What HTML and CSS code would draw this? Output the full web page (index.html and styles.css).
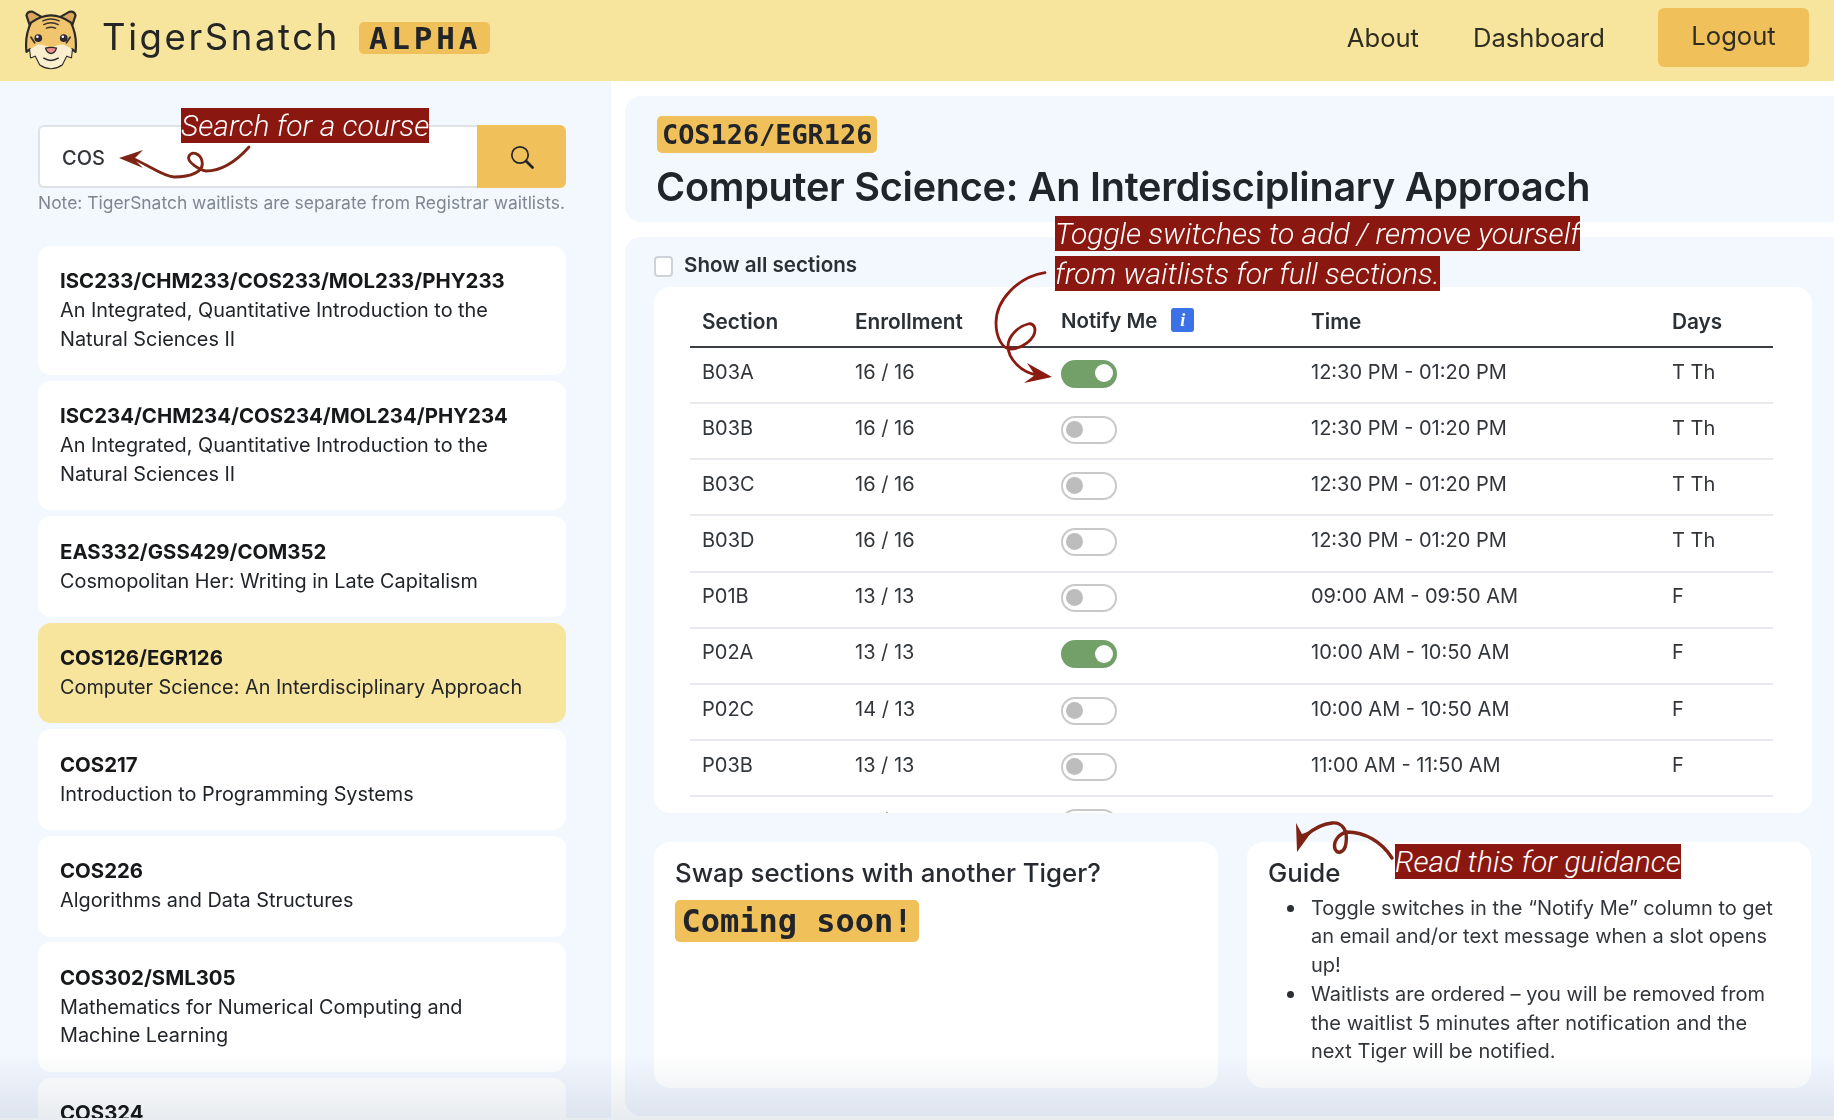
FILE: index.html
```html
<!DOCTYPE html>
<html lang="en">
<head>
<meta charset="utf-8">
<title>TigerSnatch</title>
<link rel="stylesheet" href="styles.css">
</head>
<body>
<div class="page">
  <header class="topbar">
    <div class="brand">
      <svg class="logo" viewBox="0 0 60 66" aria-hidden="true">
        <path d="M9 24 L3 6 Q4 1 10 2 L22 9 Z" fill="#d9a75b" stroke="#2c2a28" stroke-width="2.4" stroke-linejoin="round"/>
        <path d="M51 24 L57 6 Q56 1 50 2 L38 9 Z" fill="#d9a75b" stroke="#2c2a28" stroke-width="2.4" stroke-linejoin="round"/>
        <path d="M8 14 Q30 -2 52 14 Q59 28 57 46 L53 43 L52 52 L47 50 L42 60 Q30 68 18 60 L13 50 L8 52 L7 43 L3 46 Q1 28 8 14Z" fill="#f0c56d" stroke="#2c2a28" stroke-width="2.4" stroke-linejoin="round"/>
        <path d="M7 43 L8 52 L13 50 L18 60 Q30 68 42 60 L47 50 L52 52 L53 43 L44 38 Q38 37 30 42 Q22 37 16 38Z" fill="#f9efcf"/>
        <path d="M21 12 Q30 8 39 12 M22 16 Q30 12 38 16 M25 20 Q30 18 35 20" fill="none" stroke="#3a342c" stroke-width="1.6" stroke-linecap="round"/>
        <path d="M8 30 L12 36 M51 30 L47 36" fill="none" stroke="#3a342c" stroke-width="2" stroke-linecap="round"/>
        <circle class="eye" cx="16" cy="31" r="4.2"/>
        <circle class="eye" cx="44" cy="31" r="4.2"/>
        <circle class="glint" cx="15" cy="29.5" r="1.4"/>
        <circle class="glint" cx="43" cy="29.5" r="1.4"/>
        <path d="M24 42 Q30 40 36 42 Q35 47 30 48 Q25 47 24 42Z" fill="#ee8e8e" stroke="#2c2a28" stroke-width="1.4"/>
        <path d="M22 53 Q30 58 38 53" fill="none" stroke="#2c2a28" stroke-width="1.6" stroke-linecap="round"/>
      </svg>
      <span class="brand-name">TigerSnatch</span>
      <span class="alpha">ALPHA</span>
    </div>
    <nav class="nav">
      <a class="nav-link">About</a>
      <a class="nav-link">Dashboard</a>
      <a class="logout">Logout</a>
    </nav>
  </header>

  <main class="layout">
    <aside class="sidebar">
      <div class="search">
        <div class="search-input">COS</div>
        <div class="search-btn">
          <svg width="26" height="26" viewBox="0 0 26 26" aria-hidden="true">
            <circle cx="11" cy="11" r="8.2" fill="none" stroke="#212529" stroke-width="1.7"/>
            <path d="M17 17 L23.5 23.5" stroke="#212529" stroke-width="2.8" stroke-linecap="round"/>
          </svg>
        </div>
      </div>
      <p class="note">Note: TigerSnatch waitlists are separate from Registrar waitlists.</p>
      <div class="courses">
        <div class="course"><b>ISC233/CHM233/COS233/MOL233/PHY233</b><span>An Integrated, Quantitative Introduction to the Natural Sciences II</span></div>
        <div class="course"><b>ISC234/CHM234/COS234/MOL234/PHY234</b><span>An Integrated, Quantitative Introduction to the Natural Sciences II</span></div>
        <div class="course"><b>EAS332/GSS429/COM352</b><span>Cosmopolitan Her: Writing in Late Capitalism</span></div>
        <div class="course active"><b>COS126/EGR126</b><span>Computer Science: An Interdisciplinary Approach</span></div>
        <div class="course"><b>COS217</b><span>Introduction to Programming Systems</span></div>
        <div class="course"><b>COS226</b><span>Algorithms and Data Structures</span></div>
        <div class="course"><b>COS302/SML305</b><span>Mathematics for Numerical Computing and Machine Learning</span></div>
        <div class="course"><b>COS324</b><span>Introduction to Machine Learning</span></div>
      </div>
    </aside>

    <section class="content">
      <div class="title-panel">
        <span class="code-badge">COS126/EGR126</span>
        <h1 class="course-title">Computer Science: An Interdisciplinary Approach</h1>
      </div>
      <div class="detail-panel">
        <label class="show-all"><span class="checkbox"></span>Show all sections</label>
        <div class="table-card">
          <table class="sections">
            <thead>
              <tr><th class="c1">Section</th><th class="c2">Enrollment</th><th class="c3"><span class="notify">Notify Me<i class="info">i</i></span></th><th class="c4">Time</th><th>Days</th></tr>
            </thead>
            <tbody>
              <tr><td>B03A</td><td>16 / 16</td><td><span class="toggle on"></span></td><td>12:30 PM - 01:20 PM</td><td>T Th</td></tr>
              <tr><td>B03B</td><td>16 / 16</td><td><span class="toggle"></span></td><td>12:30 PM - 01:20 PM</td><td>T Th</td></tr>
              <tr><td>B03C</td><td>16 / 16</td><td><span class="toggle"></span></td><td>12:30 PM - 01:20 PM</td><td>T Th</td></tr>
              <tr><td>B03D</td><td>16 / 16</td><td><span class="toggle"></span></td><td>12:30 PM - 01:20 PM</td><td>T Th</td></tr>
              <tr><td>P01B</td><td>13 / 13</td><td><span class="toggle"></span></td><td>09:00 AM - 09:50 AM</td><td>F</td></tr>
              <tr><td>P02A</td><td>13 / 13</td><td><span class="toggle on"></span></td><td>10:00 AM - 10:50 AM</td><td>F</td></tr>
              <tr><td>P02C</td><td>14 / 13</td><td><span class="toggle"></span></td><td>10:00 AM - 10:50 AM</td><td>F</td></tr>
              <tr><td>P03B</td><td>13 / 13</td><td><span class="toggle"></span></td><td>11:00 AM - 11:50 AM</td><td>F</td></tr>
              <tr><td>P04A</td><td>13 / 13</td><td><span class="toggle"></span></td><td>01:30 PM - 02:20 PM</td><td>F</td></tr>
            </tbody>
          </table>
        </div>
        <div class="bottom-cards">
          <div class="info-card">
            <h2 class="card-title">Swap sections with another Tiger?</h2>
            <span class="soon">Coming soon!</span>
          </div>
          <div class="info-card">
            <h2 class="card-title">Guide</h2>
            <ul class="guide">
              <li>Toggle switches in the “Notify Me” column to get an email and/or text message when a slot opens up!</li>
              <li>Waitlists are ordered – you will be removed from the waitlist 5 minutes after notification and the next Tiger will be notified.</li>
            </ul>
          </div>
        </div>
      </div>
    </section>
  </main>

  <div class="fade"></div>

  <svg class="arrows" width="1834" height="1120" viewBox="0 0 1834 1120" aria-hidden="true">
    <g class="arrow-line">
      <path class="thin" d="M249 147 C232 166 218 171 206 171 C200 170 186 162 189 156 C192 151 200 153 202 161 C205 172 190 177 174 177 C162 176 150 166 134 159"/>
      <path class="thin red" d="M1045 272.7 C1018 277 996 300 996 323 C996 338 1003 349 1010 349 C1022 349 1035 339 1035 330 C1035 325 1031 323 1028 324 C1019 326 1008 336 1008 346 C1008 358 1020 372 1037 375"/>
      <path d="M1392 858 C1382 842 1365 832 1347 832 C1338 834 1333 842 1335 849 C1338 855 1345 852 1346 843 C1348 830 1342 822 1332 823 C1320 824 1312 830 1305 836"/>
    </g>
    <g class="arrow-head">
      <path d="M119 158 L143 150 L134 159 L143 168Z"/>
      <path class="red" d="M1052 377 L1027 363 L1035 375 L1024 383Z"/>
      <path d="M1297 852 L1296 823 L1302 834 L1313 830Z"/>
    </g>
  </svg>
  <div class="tag tag-search">Search for a course</div>
  <div class="tag tag-toggle"><span>Toggle switches to add / remove yourself</span><span>from waitlists for full sections.</span></div>
  <div class="tag tag-guide">Read this for guidance</div>
</div>
</body>
</html>
```
FILE: styles.css
```css
* { box-sizing: border-box; }
html, body { margin: 0; padding: 0; }
body {
  background: #fff;
  color: #212529;
  font-family: Inter, "Noto Sans", "Liberation Sans", sans-serif;
  font-size: 20px;
  line-height: 28.8px;
}
.page { position: relative; width: 1834px; height: 1120px; overflow: hidden; }

.topbar {
  display: flex;
  align-items: center;
  justify-content: space-between;
  height: 81px;
  padding: 0 25px 0 23px;
  background: #f7e49d;
}
.brand { display: flex; align-items: center; margin-top: -8px; }
.logo { width: 56px; height: 60px; margin-top: 6px; }
.eye { fill: #2b2a33; }
.glint { fill: #fff; }
.brand-name {
  margin-left: 23px;
  font-size: 36.5px;
  line-height: 44px;
  letter-spacing: 2.6px;
  color: #252525;
}
.alpha {
  margin: 2px 0 0 19px;
  padding: 0 9px 0 10px;
  border-radius: 5px;
  background: #f0c15a;
  font-family: "DejaVu Sans Mono", monospace;
  font-weight: 700;
  font-size: 31px;
  line-height: 32px;
  letter-spacing: 3.8px;
}
.nav { display: flex; align-items: center; }
.nav-link { margin-right: 54px; font-size: 25.6px; color: #302e22; position: relative; left: 2px; top: -2px; }
.logout {
  display: block;
  width: 151px;
  height: 59px;
  margin: -6px 0 0 1px;
  border-radius: 6px;
  background: #f0c15a;
  font-size: 25.6px;
  line-height: 56px;
  text-align: center;
  color: #302e22;
}

.layout { display: flex; height: 1037px; }
.sidebar {
  flex: none;
  width: 611px;
  padding: 44px 45px 0 38px;
  background: #f3f7fe;
  overflow: hidden;
}
.search { display: flex; height: 63px; }
.search-input {
  flex: 1;
  padding-left: 22px;
  border: 2.5px solid #dee2e6;
  border-right: 0;
  border-radius: 6px 0 0 6px;
  background: #fff;
  font-weight: 500;
  line-height: 62px;
  color: #32363a;
}
.search-btn {
  display: flex;
  align-items: center;
  justify-content: center;
  width: 89px;
  border-radius: 0 6px 6px 0;
  background: #f0c15a;
}
.note {
  margin: 1px 0 0;
  font-size: 17.45px;
  line-height: 28px;
  white-space: nowrap;
  color: #7e8791;
}
.courses {
  display: flex;
  flex-direction: column;
  gap: 5.76px;
  margin-top: 28.5px;
}
.course {
  flex: none;
  padding: 21.6px 22px;
  border-radius: 13px;
  background: #fff;
}
.course b { display: block; font-weight: 700; font-size: 20.4px; color: #16181a; }
.course span { display: block; font-size: 19.85px; }
.course.active { background: #f7e49d; }

.content {
  flex: 1;
  min-width: 0;
  padding: 15px 0 2px 14px;
  display: flex;
  flex-direction: column;
  gap: 15px;
}
.title-panel {
  height: 126px;
  padding: 20px 32px 0;
  border-radius: 16px 0 0 16px;
  background: #f3f7fe;
}
.code-badge {
  display: inline-block;
  height: 37px;
  padding: 0 5px;
  border-radius: 5px;
  background: #f0c15a;
  font-family: "DejaVu Sans Mono", monospace;
  font-weight: 700;
  font-size: 26.88px;
  line-height: 37px;
}
.course-title {
  margin: 10px 0 0 -1px;
  font-size: 39.6px;
  line-height: 48px;
  font-weight: 600;
  letter-spacing: -0.25px;
  white-space: nowrap;
}
.detail-panel {
  flex: 1;
  padding: 10.5px 22px 0 29px;
  border-radius: 16px 0 0 16px;
  background: #f3f7fe;
}
.show-all {
  display: flex;
  align-items: center;
  height: 36px;
  margin-bottom: 3.5px;
  font-size: 20.6px;
  font-weight: 600;
  color: #2b3035;
}
.checkbox {
  width: 19px;
  height: 21px;
  margin: 2px 11px 0 0;
  border: 2px solid #cfd3d8;
  border-radius: 4px;
  background: #fff;
}
.table-card {
  height: 526px;
  padding: 0 36px;
  border-radius: 16px;
  background: #fff;
  overflow: hidden;
}
.sections { width: 1083px; border-collapse: collapse; table-layout: fixed; }
.sections th {
  height: 60px;
  padding: 21px 12px 0;
  border-bottom: 2px solid #3a3d41;
  text-align: left;
  vertical-align: top;
  font-size: 20.8px;
  font-weight: 600;
  color: #2b3035;
}
.sections td {
  height: 56.16px;
  padding: 9.6px 12px 0;
  border-bottom: 2px solid #e9eaf0;
  vertical-align: top;
  color: #32363a;
}
.c1 { width: 153px; }
.c2 { width: 206px; }
.c3 { width: 250px; }
.c4 { width: 361px; }
.notify { display: flex; align-items: center; position: relative; top: -1px; font-size: 20.4px; }
.info {
  width: 23px;
  height: 24px;
  margin: -2px 0 0 14px;
  border-radius: 3px;
  background: #3c72e8;
  color: #fff;
  font-family: "Liberation Serif", serif;
  font-size: 18px;
  line-height: 24px;
  text-align: center;
}
.toggle {
  position: relative;
  display: block;
  width: 56px;
  height: 28px;
  margin-top: 2px;
  border: 2.5px solid #c9c9c9;
  border-radius: 14px;
  background: #fff;
}
.toggle::after {
  content: "";
  position: absolute;
  left: 3px;
  top: 3px;
  width: 17px;
  height: 17px;
  border-radius: 50%;
  background: #bdbdbd;
}
.toggle.on { border-color: #72a068; background: #72a068; }
.toggle.on::after { left: auto; right: 2px; top: 2.5px; width: 18px; height: 18px; background: #fff; }

.bottom-cards {
  display: grid;
  grid-template-columns: 564px 564px;
  gap: 29px;
  margin-top: 29px;
}
.info-card {
  height: 246px;
  padding: 15px 21px;
  border-radius: 16px;
  background: #fff;
}
.card-title {
  margin: 0;
  font-size: 25.8px;
  line-height: 32px;
  font-weight: 500;
  color: #272b30;
}
.soon {
  display: inline-block;
  margin-top: 11px;
  width: 244px;
  height: 42px;
  border-radius: 5px;
  background: #f0c15a;
  font-family: "DejaVu Sans Mono", monospace;
  font-weight: 700;
  font-size: 32px;
  line-height: 42px;
  text-align: center;
}
.guide { margin: 4.5px 0 0; padding: 0 0 0 43px; list-style: none; color: #32363a; }
.guide li { position: relative; }
.guide li::before {
  content: "";
  position: absolute;
  left: -24px;
  top: 11px;
  width: 7px;
  height: 7px;
  border-radius: 50%;
  background: #2b2f33;
}

.fade {
  position: absolute;
  left: 0;
  right: 0;
  bottom: 0;
  height: 66px;
  background: linear-gradient(#fff, #e8ebef);
  mix-blend-mode: multiply;
  pointer-events: none;
}
.arrows { position: absolute; left: 0; top: 0; pointer-events: none; }
.arrow-line path { fill: none; stroke: #7d2414; stroke-width: 3.4; stroke-linecap: round; stroke-linejoin: round; }
.arrow-line path.thin { stroke-width: 2.8; }
.arrow-line path.red { stroke: #8b1a10; }
.arrow-head path { fill: #7d2414; }
.arrow-head path.red { fill: #8b1a10; }
.tag {
  position: absolute;
  font-family: Roboto, "Liberation Sans", sans-serif;
  font-style: italic;
  font-weight: 300;
  font-size: 30px;
  line-height: 35px;
  color: #fff;
  white-space: nowrap;
}
.tag-search, .tag-guide, .tag-toggle span { background: #8a1810; }
.tag-search { left: 181px; top: 108px; }
.tag-guide { left: 1395px; top: 844px; }
.tag-toggle { left: 1055px; top: 216px; }
.tag-toggle span { display: table; margin-bottom: 5px; }
```
